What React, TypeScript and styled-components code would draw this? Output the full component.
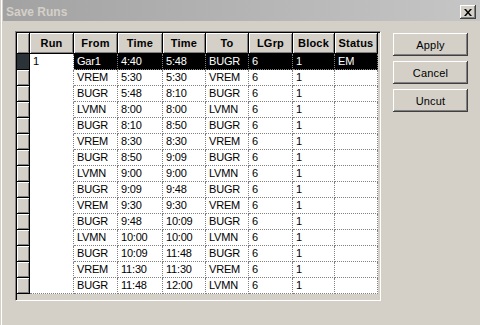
import React from "react";
import styled, { createGlobalStyle } from "styled-components";

const GlobalStyle = createGlobalStyle`
  html, body {
    margin: 0;
    padding: 0;
    background: #d4d0c8;
  }
  body {
    font-family: "Liberation Sans", Arial, sans-serif;
    font-size: 11px;
  }
`;

const Window = styled.div`
  width: 480px;
  height: 325px;
  box-sizing: border-box;
  padding-left: 3px;
  background: #d4d0c8;
  box-shadow: inset 1px 0 0 #d4d0c8, inset 2px 0 0 #ffffff;
  display: flex;
  flex-direction: column;
  overflow: hidden;
`;

const TitleBar = styled.div`
  height: 21px;
  display: flex;
  align-items: center;
  justify-content: space-between;
  background: linear-gradient(to right, #a2a2a2, #c6c6c6);
  padding-left: 3px;
`;

const Title = styled.span`
  font-family: "Liberation Sans", Arial, sans-serif;
  font-weight: bold;
  font-size: 12px;
  color: #d4d0c8;
  padding-top: 3px;
`;

const CloseButton = styled.div`
  width: 16px;
  height: 14px;
  box-sizing: border-box;
  margin: 3px 4px 0 0;
  background: #d4d0c8;
  display: flex;
  align-items: center;
  justify-content: center;
  box-shadow: inset -1px -1px 0 #404040, inset 1px 1px 0 #ffffff,
    inset -2px -2px 0 #808080;
`;

const Body = styled.div`
  display: flex;
  align-items: flex-start;
  padding: 10px 0 0 12px;
`;

const GridFrame = styled.div`
  width: 366px;
  height: 270px;
  box-sizing: border-box;
  border-style: solid;
  border-width: 1px;
  border-color: #808080 #ffffff #ffffff #808080;
  box-shadow: inset 1px 1px 0 #000000, inset -1px -1px 0 #d4d0c8;
  padding: 1px;
  background: #d4d0c8;
  overflow: hidden;
`;

const Table = styled.table`
  border-collapse: separate;
  border-spacing: 0;
  table-layout: fixed;
  width: 361px;
  font-family: "Liberation Sans", Arial, sans-serif;
  font-size: 11px;
  letter-spacing: -0.2px;
`;

const HeadCell = styled.th`
  height: 21px;
  padding: 0;
  box-sizing: border-box;
  background: #d4d0c8;
  font-weight: bold;
  letter-spacing: 0.2px;
  text-align: center;
  color: #000;
  border-right: 1px solid #000;
  border-bottom: 1px solid #000;
  box-shadow: inset 1px 1px 0 #ffffff, inset -1px -1px 0 #808080;
`;

const RowHead = styled.td<{ $active?: boolean }>`
  height: 16px;
  padding: 0;
  box-sizing: border-box;
  background: ${(p) => (p.$active ? "#2b3238" : "#d4d0c8")};
  border-right: 1px solid #000;
  border-bottom: 1px solid #000;
  box-shadow: ${(p) =>
    p.$active ? "none" : "inset 1px 1px 0 #ffffff, inset -1px -1px 0 #808080"};
`;

const Cell = styled.td<{ $selected?: boolean; $noLine?: boolean }>`
  height: 16px;
  padding: 0 0 0 3px;
  box-sizing: border-box;
  white-space: nowrap;
  overflow: hidden;
  line-height: 15px;
  background: ${(p) => (p.$selected ? "#000000" : "#ffffff")};
  color: ${(p) => (p.$selected ? "#ffffff" : "#000000")};
  border-right: 1px dotted #808080;
  border-bottom: 1px dotted
    ${(p) => (p.$noLine ? "#ffffff" : "#808080")};
`;

const ButtonColumn = styled.div`
  display: flex;
  flex-direction: column;
  gap: 5px;
  margin: 2px 0 0 12px;
`;

const Button = styled.div`
  width: 75px;
  height: 23px;
  box-sizing: border-box;
  display: flex;
  align-items: center;
  justify-content: center;
  background: #d4d0c8;
  color: #000;
  font-family: "Liberation Sans", Arial, sans-serif;
  font-size: 11px;
  letter-spacing: 0.2px;
  box-shadow: inset -1px -1px 0 #404040, inset 1px 1px 0 #ffffff,
    inset -2px -2px 0 #808080;
`;

const widths = [13, 44, 44, 45, 43, 43, 44, 42, 43];
const headers = ["", "Run", "From", "Time", "Time", "To", "LGrp", "Block", "Status"];

type Run = [string, string, string, string, string, string, string, string];

const rows: Run[] = [
  ["1", "Gar1", "4:40", "5:48", "BUGR", "6", "1", "EM"],
  ["", "VREM", "5:30", "5:30", "VREM", "6", "1", ""],
  ["", "BUGR", "5:48", "8:10", "BUGR", "6", "1", ""],
  ["", "LVMN", "8:00", "8:00", "LVMN", "6", "1", ""],
  ["", "BUGR", "8:10", "8:50", "BUGR", "6", "1", ""],
  ["", "VREM", "8:30", "8:30", "VREM", "6", "1", ""],
  ["", "BUGR", "8:50", "9:09", "BUGR", "6", "1", ""],
  ["", "LVMN", "9:00", "9:00", "LVMN", "6", "1", ""],
  ["", "BUGR", "9:09", "9:48", "BUGR", "6", "1", ""],
  ["", "VREM", "9:30", "9:30", "VREM", "6", "1", ""],
  ["", "BUGR", "9:48", "10:09", "BUGR", "6", "1", ""],
  ["", "LVMN", "10:00", "10:00", "LVMN", "6", "1", ""],
  ["", "BUGR", "10:09", "11:48", "BUGR", "6", "1", ""],
  ["", "VREM", "11:30", "11:30", "VREM", "6", "1", ""],
  ["", "BUGR", "11:48", "12:00", "LVMN", "6", "1", ""],
];

const App = () => {
  return (
    <>
      <GlobalStyle />
      <Window>
        <TitleBar>
          <Title>Save Runs</Title>
          <CloseButton>
            <svg width="8" height="7" viewBox="0 0 8 7">
              <path d="M0 0h2l2 2.5L6 0h2L5 3.5 8 7H6L4 4.5 2 7H0l3-3.5z" fill="#000" />
            </svg>
          </CloseButton>
        </TitleBar>
        <Body>
          <GridFrame>
            <Table>
              <colgroup>
                {widths.map((w, i) => (
                  <col key={i} style={{ width: w }} />
                ))}
              </colgroup>
              <thead>
                <tr>
                  {headers.map((h, i) => (
                    <HeadCell key={i}>{h}</HeadCell>
                  ))}
                </tr>
              </thead>
              <tbody>
                {rows.map((r, ri) => (
                  <tr key={ri}>
                    <RowHead $active={ri === 0} />
                    {r.map((v, ci) => (
                      <Cell
                        key={ci}
                        $selected={ri === 0 && ci > 0}
                        $noLine={ci === 0 && ri < rows.length - 1}
                      >
                        {v}
                      </Cell>
                    ))}
                  </tr>
                ))}
              </tbody>
            </Table>
          </GridFrame>
          <ButtonColumn>
            <Button>Apply</Button>
            <Button>Cancel</Button>
            <Button>Uncut</Button>
          </ButtonColumn>
        </Body>
      </Window>
    </>
  );
};

export default App;
